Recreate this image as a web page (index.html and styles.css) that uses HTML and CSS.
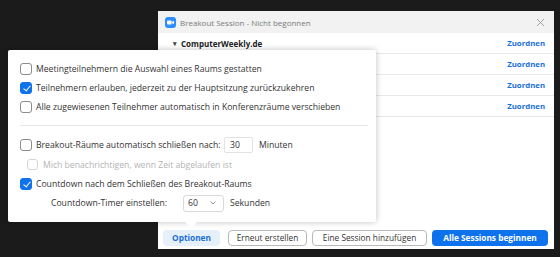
FILE: index.html
```html
<!DOCTYPE html>
<html lang="de">
<head>
<meta charset="utf-8">
<link rel="stylesheet" href="styles.css">
</head>
<body>
<div class="desk">
  <div class="window">
    <div class="titlebar">
      <span class="appicon">
        <svg width="11" height="11" viewBox="0 0 11 11"><rect width="11" height="11" rx="3" fill="#2d8cff"/><rect x="2" y="3.5" width="4.6" height="4" rx="1" fill="#fff"/><path d="M6.9 5 L9 3.8 V7.2 L6.9 6 Z" fill="#fff"/></svg>
      </span>
      <span class="title">Breakout Session - Nicht begonnen</span>
      <span class="close">
        <svg width="9" height="9" viewBox="0 0 9 9"><path d="M1 1 L8 8 M8 1 L1 8" stroke="#9a9a9a" stroke-width="0.9"/></svg>
      </span>
    </div>
    <div class="list">
      <div class="row"><span class="name"><span class="caret">▾</span>ComputerWeekly.de</span><span class="assign">Zuordnen</span></div>
      <div class="row"><span class="name"></span><span class="assign">Zuordnen</span></div>
      <div class="row"><span class="name"></span><span class="assign">Zuordnen</span></div>
      <div class="row"><span class="name"></span><span class="assign">Zuordnen</span></div>
    </div>
    <div class="footer">
      <button class="btn opt">Optionen</button>
      <button class="btn outline">Erneut erstellen</button>
      <button class="btn outline">Eine Session hinzufügen</button>
      <button class="btn primary">Alle Sessions beginnen</button>
    </div>
  </div>

  <div class="popup">
    <div class="group">
      <label class="item"><span class="cb"></span>Meetingteilnehmern die Auswahl eines Raums gestatten</label>
      <label class="item"><span class="cb on"></span>Teilnehmern erlauben, jederzeit zu der Hauptsitzung zurückzukehren</label>
      <label class="item"><span class="cb"></span>Alle zugewiesenen Teilnehmer automatisch in Konferenzräume verschieben</label>
    </div>
    <div class="sep"></div>
    <div class="group lower">
      <label class="item tall"><span class="cb"></span><span class="lbl-close">Breakout-Räume automatisch schließen nach:</span><span class="field">30</span><span class="unit">Minuten</span></label>
      <label class="item sub disabled"><span class="cb dis"></span>Mich benachrichtigen, wenn Zeit abgelaufen ist</label>
      <label class="item"><span class="cb on"></span>Countdown nach dem Schließen des Breakout-Raums</label>
      <div class="item timer"><span class="lbl-timer">Countdown-Timer einstellen:</span><span class="select">60<svg class="chev" width="6" height="4" viewBox="0 0 6 4"><path d="M0.5 0.5 L3 3 L5.5 0.5" fill="none" stroke="#777" stroke-width="0.8"/></svg></span><span class="unit">Sekunden</span></div>
    </div>
    <span class="pointer"></span>
  </div>
</div>
</body>
</html>
```
FILE: styles.css
```css
* { box-sizing: border-box; }
html, body { margin: 0; padding: 0; }
body {
  background: #1b1b1b;
  font-family: "Open Sans", "Noto Sans", sans-serif;
  font-size: 8.65px;
  color: #2b2b2b;
}
.desk {
  position: relative;
  width: 560px;
  height: 257px;
  overflow: hidden;
}
.window {
  position: absolute;
  left: 158px;
  top: 11px;
  width: 396px;
  height: 238px;
  background: #ffffff;
  display: flex;
  flex-direction: column;
}
.titlebar {
  height: 22px;
  background: #f2f2f2;
  display: flex;
  align-items: center;
  padding: 0 9px 0 7px;
}
.appicon { display: flex; width: 11px; height: 11px; margin-right: 4px; }
.title { color: #7a7a7a; flex: 1; font-size: 8px; }
.close { display: flex; }
.list { display: flex; flex-direction: column; }
.row {
  height: 21px;
  display: flex;
  align-items: center;
  justify-content: space-between;
  border-bottom: 1px solid #e9e9e9;
  padding: 0 9px 0 15px;
}
.name { font-weight: 700; color: #222; font-size: 8px; }
.caret { font-size: 7px; color: #444; margin-right: 4px; position: relative; top: -1px; }
.assign { color: #1a6fd8; font-weight: 700; font-size: 7.8px; }
.footer {
  margin-top: auto;
  display: flex;
  align-items: center;
  padding: 0 6px 3px 5px;
  height: 20px;
}
.btn {
  font-family: inherit;
  font-size: 8.3px;
  height: 16px;
  border-radius: 4px;
  padding: 0;
  margin: 0;
  display: flex;
  align-items: center;
  justify-content: center;
}
.opt {
  width: 57px;
  background: #e6f0fb;
  border: none;
  color: #1a6fd8;
  font-weight: 700;
  margin-right: 8px;
}
.outline {
  background: #fff;
  border: 1px solid #b9b9b9;
  color: #333;
  margin-right: 5px;
}
.outline:nth-child(2) { width: 79px; }
.outline:nth-child(3) { width: 115px; }
.primary {
  width: 116px;
  background: #0e72ed;
  border: none;
  color: #fff;
  font-weight: 700;
}

.popup {
  position: absolute;
  left: 8px;
  top: 50px;
  width: 368px;
  height: 172px;
  background: #fff;
  border-radius: 2px;
  box-shadow: 0 0 6px rgba(0,0,0,0.25);
  padding: 9px 8px 0 12px;
}
.group { display: flex; flex-direction: column; }
.item {
  display: flex;
  align-items: center;
  height: 19px;
  white-space: nowrap;
  color: #333;
}
.cb {
  width: 12px;
  height: 12px;
  border: 1px solid #8c8c8c;
  border-radius: 3px;
  margin-right: 4px;
  background: #fff;
  flex: none;
  position: relative;
}
.cb.on {
  background: #0e72ed;
  border-color: #0e72ed;
}
.cb.on::after {
  content: "";
  position: absolute;
  left: 3.5px;
  top: 1.5px;
  width: 3px;
  height: 6px;
  border: solid #fff;
  border-width: 0 1.2px 1.2px 0;
  transform: rotate(40deg);
}
.cb.dis { border-color: #d6d6d6; width: 11px; height: 11px; margin-right: 5px; }
.sep {
  height: 1px;
  background: #e6e6e6;
  margin: 9px 0 9px 0;
}
.item.tall { height: 20px; }
.item.sub { padding-left: 7px; }
.disabled { color: #b4b4b4; }
.lbl-close { width: 188px; }
.field {
  width: 29px;
  height: 16px;
  border: 1px solid #e2e2e2;
  border-radius: 2px;
  padding-left: 5px;
  display: flex;
  align-items: center;
}
.unit { margin-left: 6px; }
.timer { padding-left: 31px; height: 20px; }
.lbl-timer { width: 132px; }
.select {
  width: 41px;
  height: 17px;
  border: 1px solid #d9d9d9;
  border-radius: 3px;
  padding: 0 7px 0 4px;
  display: flex;
  align-items: center;
  justify-content: space-between;
}
.chev { display: block; }
.pointer {
  position: absolute;
  left: 177px;
  bottom: -6px;
  width: 0;
  height: 0;
  border-left: 6px solid transparent;
  border-right: 6px solid transparent;
  border-top: 6px solid #fff;
}
```
